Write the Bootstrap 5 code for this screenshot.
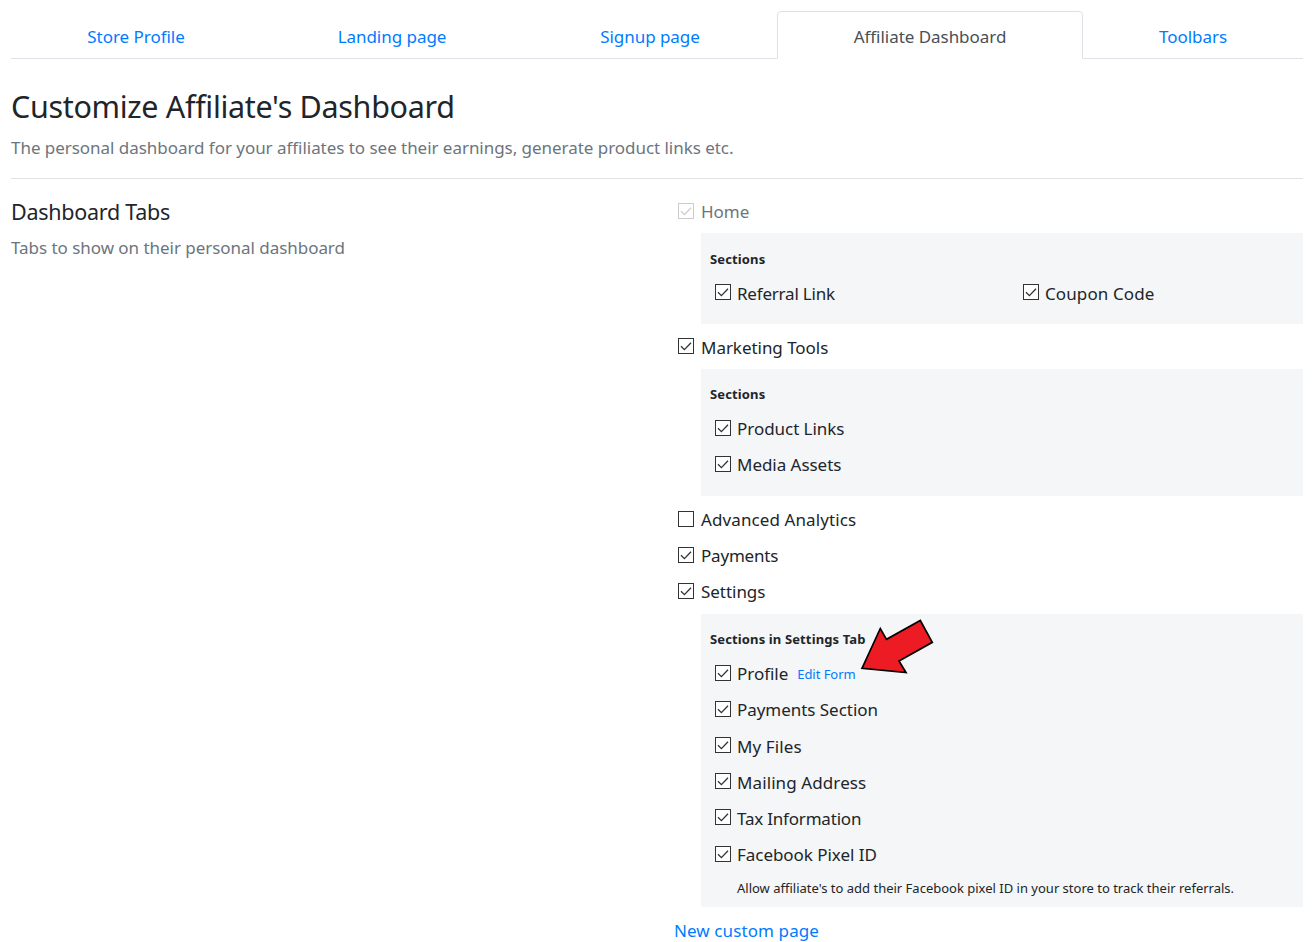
<!DOCTYPE html>
<html lang="en">
<head>
<meta charset="utf-8">
<meta name="viewport" content="width=device-width, initial-scale=1">
<title>Affiliate Dashboard</title>
<link href="https://cdn.jsdelivr.net/npm/bootstrap@5.3.0/dist/css/bootstrap.min.css" rel="stylesheet">
<style>
body { font: 17px/27px "Noto Sans", "Open Sans", sans-serif; letter-spacing: -.04px; color: #212529; background: #fff; overflow: hidden; }
a { color: #007bff; text-decoration: none; }
.page { padding: 11px 12px 0 11px; }
.page .nav-tabs { --bs-nav-tabs-border-radius: 4.5px; --bs-nav-link-color: #007bff; --bs-nav-tabs-link-active-color: #495057; height: 48px; }
.page .nav-link { font-size: 17px; line-height: 28px; padding: 11px 0 7px; }
.tab-a { width: 250px; } .tab-b { width: 262px; } .tab-c { width: 254px; } .tab-d { width: 306px; } .tab-e { width: 220px; }
.muted { color: #6c757d; }
h1 { font-size: 30.5px; line-height: 38px; letter-spacing: -.32px; font-weight: 400; margin: 28px 0 9px; }
h2 { font-size: 21.5px; line-height: 27px; letter-spacing: -.26px; font-weight: 400; margin: 0 0 9px; }
.rule { border-top: 1px solid #e1e2e3; margin: 17px 0 19px; }
.intro { width: 663px; }
.check { display: flex; height: 27.15px; margin: 0 0 9px 4px; }
.check.lead-in { margin-bottom: 8.15px; }
.check .form-check-input { flex: none; width: 16px; height: 16px; margin: 4.6px 7px 0 0; border: 1px solid #333; border-radius: 0; background-color: #fff; }
.check .form-check-input:checked { background: #fff url("data:image/svg+xml,%3Csvg xmlns='http://www.w3.org/2000/svg' viewBox='0 0 14 14'%3E%3Cpath d='M2 7.2l3.4 3.4L12 3.7' fill='none' stroke='%23333' stroke-width='1.3'/%3E%3C/svg%3E") center/14px 14px no-repeat; }
.check .form-check-input:not(:checked) { margin-top: 5.2px; }
.check .form-check-input:disabled { border-color: #ccc; opacity: 1; background-image: url("data:image/svg+xml,%3Csvg xmlns='http://www.w3.org/2000/svg' viewBox='0 0 14 14'%3E%3Cpath d='M2 7.2l3.4 3.4L12 3.7' fill='none' stroke='%23ccc' stroke-width='1.3'/%3E%3C/svg%3E"); }
.check .form-check-input:disabled ~ .form-check-label { opacity: 1; color: #6c757d; }
.panel { margin: 0 0 9.4px 27px; padding: 16px 9px 8.4px; background: #f4f6f8; position: relative; }
.panel.tools { margin-bottom: 9.9px; }
.panel.settings { margin-top: 9px; padding-bottom: 9px; margin-bottom: 10px; }
.panel h3 { font-size: 13px; line-height: 20px; font-weight: 700; letter-spacing: .13px; margin: 0 0 10.4px; }
.panel.tools { padding-top: 15.4px; }
.panel.tools h3 { margin-bottom: 11px; }
.panel.settings { padding-top: 14.8px; }
.panel.settings h3 { margin-bottom: 11.2px; }
.panel .check { margin-left: 5px; }
.panel .check .form-check-input { margin-right: 6px; }
.half { width: 308px; }
.loose { letter-spacing: .1px; }
.tight { letter-spacing: -.2px; }
.edit { font-size: 13px; margin: .6px 0 0 9px; }
.note { font-size: 13px; line-height: 20px; letter-spacing: 0; margin: 10px 0 0 27px; }
.arrow { position: absolute; left: 155px; top: 0; }
</style>
</head>
<body>
<main class="page">
  <ul class="nav nav-tabs flex-nowrap text-center">
    <li class="nav-item tab-a"><a class="nav-link" href="#">Store Profile</a></li>
    <li class="nav-item tab-b"><a class="nav-link" href="#">Landing page</a></li>
    <li class="nav-item tab-c"><a class="nav-link" href="#">Signup page</a></li>
    <li class="nav-item tab-d"><a class="nav-link active" href="#">Affiliate Dashboard</a></li>
    <li class="nav-item tab-e"><a class="nav-link" href="#">Toolbars</a></li>
  </ul>
  <h1>Customize Affiliate's Dashboard</h1>
  <p class="muted mb-0">The personal dashboard for your affiliates to see their earnings, generate product links etc.</p>
  <div class="rule"></div>
  <div class="d-flex">
    <section class="intro flex-shrink-0">
      <h2>Dashboard Tabs</h2>
      <p class="muted mb-0">Tabs to show on their personal dashboard</p>
    </section>
    <form class="flex-grow-1">
      <div class="check lead-in"><input class="form-check-input" type="checkbox" id="home" checked disabled><label class="form-check-label" for="home">Home</label></div>
      <div class="panel">
        <h3>Sections</h3>
        <div class="d-flex">
          <div class="half"><div class="check"><input class="form-check-input" type="checkbox" id="ref" checked><label class="tight" for="ref">Referral Link</label></div></div>
          <div><div class="check"><input class="form-check-input" type="checkbox" id="coupon" checked><label class="loose" for="coupon">Coupon Code</label></div></div>
        </div>
      </div>
      <div class="check lead-in"><input class="form-check-input" type="checkbox" id="mkt" checked><label for="mkt">Marketing Tools</label></div>
      <div class="panel tools">
        <h3>Sections</h3>
        <div class="check"><input class="form-check-input" type="checkbox" id="prod" checked><label for="prod">Product Links</label></div>
        <div class="check"><input class="form-check-input" type="checkbox" id="media" checked><label for="media">Media Assets</label></div>
      </div>
      <div class="check"><input class="form-check-input" type="checkbox" id="adv"><label class="loose" for="adv">Advanced Analytics</label></div>
      <div class="check"><input class="form-check-input" type="checkbox" id="pay" checked><label class="tight" for="pay">Payments</label></div>
      <div class="check lead-in"><input class="form-check-input" type="checkbox" id="set" checked><label for="set">Settings</label></div>
      <div class="panel settings">
        <h3>Sections in Settings Tab</h3>
        <div class="check"><input class="form-check-input" type="checkbox" id="profile" checked><label for="profile">Profile</label><a class="edit" href="#">Edit Form</a></div>
        <div class="check"><input class="form-check-input" type="checkbox" id="paysec" checked><label for="paysec">Payments Section</label></div>
        <div class="check"><input class="form-check-input" type="checkbox" id="files" checked><label class="loose" for="files">My Files</label></div>
        <div class="check"><input class="form-check-input" type="checkbox" id="mail" checked><label class="loose" for="mail">Mailing Address</label></div>
        <div class="check"><input class="form-check-input" type="checkbox" id="tax" checked><label class="tight" for="tax">Tax Information</label></div>
        <div class="check"><input class="form-check-input" type="checkbox" id="pixel" checked><label for="pixel">Facebook Pixel ID</label></div>
        <p class="note">Allow affiliate's to add their Facebook pixel ID in your store to track their referrals.</p>
        <svg class="arrow" width="84" height="66" viewBox="0 0 84 66" aria-hidden="true"><path d="M6 54.3L24.3 14.5 30.5 25.3 64.3 6.5 76.3 28.3 43 47 50 58.5Z" fill="#ed1c24" stroke="#000" stroke-width="1.7"/></svg>
      </div>
      <a class="loose" href="#">New custom page</a>
    </form>
  </div>
</main>
<script src="https://cdn.jsdelivr.net/npm/bootstrap@5.3.0/dist/js/bootstrap.bundle.min.js"></script>
</body>
</html>
